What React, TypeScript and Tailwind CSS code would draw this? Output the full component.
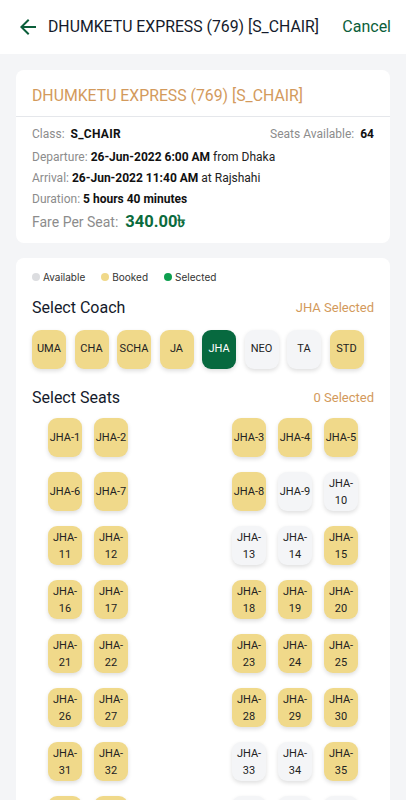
import { MdArrowBack } from "react-icons/md";

type SeatState = "booked" | "available" | "selected";

const coaches = [
  { name: "UMA", state: "booked" },
  { name: "CHA", state: "booked" },
  { name: "SCHA", state: "booked" },
  { name: "JA", state: "booked" },
  { name: "JHA", state: "selected" },
  { name: "NEO", state: "available" },
  { name: "TA", state: "available" },
  { name: "STD", state: "booked" },
] as { name: string; state: SeatState }[];

const availableSeats = [9, 10, 13, 14, 33, 34, 38, 39, 40];

const stateClass = (state: SeatState) => {
  if (state === "selected") return "bg-[#07693f] text-white";
  if (state === "available") return "bg-[#f4f5f7] text-[#222]";
  return "bg-[#f0d98a] text-[#222]";
};

const InfoRow = ({ label, value, extra }: { label: string; value: string; extra?: string }) => (
  <p className="flex h-[21px] items-center text-[12px] text-[#8c8c8c]">
    {label}:&nbsp;<span className="font-bold text-[#111]">{value}</span>
    {extra && <span className="text-[#222]">&nbsp;{extra}</span>}
  </p>
);

const Seat = ({ num }: { num: number }) => {
  const state: SeatState = availableSeats.includes(num) ? "available" : "booked";
  return (
    <button
      className={`flex h-[39px] w-[34px] items-center justify-center rounded-[9px] text-center text-[11px] leading-[17px] shadow-[0_2px_4px_rgba(0,0,0,0.13)] ${stateClass(state)}`}
    >
      JHA-{num}
    </button>
  );
};

const Legend = ({ color, label }: { color: string; label: string }) => (
  <div className="flex items-center gap-[3px]">
    <span className={`h-[8px] w-[8px] rounded-full ${color}`} />
    <span>{label}</span>
  </div>
);

export default function App() {
  const rows: number[][] = [];
  for (let i = 0; i < 8; i++) rows.push([1, 2, 3, 4, 5].map((n) => i * 5 + n));

  return (
    <div className="min-h-[800px] bg-[#f4f5f7] font-['Roboto','Noto_Sans','DejaVu_Sans',sans-serif]">
      <header className="flex h-[54px] items-center bg-white pl-4 pr-[15px]">
        <MdArrowBack className="text-[24px] text-[#0b5e3a]" />
        <h1 className="ml-2 flex-1 text-[15.8px] text-[#141a2b]">DHUMKETU EXPRESS (769) [S_CHAIR]</h1>
        <button className="text-[16px] text-[#0b5e3a]">Cancel</button>
      </header>

      <div className="px-4 pt-4">
        <section className="rounded-lg bg-white">
          <div className="border-b border-[#e5e7eb] px-4 pb-[8px] pt-[14px]">
            <h2 className="text-[15.8px] leading-6 text-[#d39a5c]">DHUMKETU EXPRESS (769) [S_CHAIR]</h2>
          </div>
          <div className="px-4 pb-[8px] pt-[5px]">
            <div className="flex h-[24px] items-center justify-between text-[12px] text-[#8c8c8c]">
              <p>
                Class:&nbsp;&nbsp;<span className="font-bold tracking-[0.3px] text-[#111]">S_CHAIR</span>
              </p>
              <p>
                Seats Available:&nbsp;&nbsp;<span className="font-bold text-[#111]">64</span>
              </p>
            </div>
            <InfoRow label="Departure" value="26-Jun-2022 6:00 AM" extra="from Dhaka" />
            <InfoRow label="Arrival" value="26-Jun-2022 11:40 AM" extra="at Rajshahi" />
            <InfoRow label="Duration" value="5 hours 40 minutes" />
            <p className="flex h-[26px] items-center text-[14px] text-[#8c8c8c]">
              Fare Per Seat:&nbsp;&nbsp;
              <span className="text-[16.5px] font-bold text-[#0b6b3d]">340.00৳</span>
            </p>
          </div>
        </section>

        <section className="mt-[15px] rounded-lg bg-white px-4 pb-6 pt-[12px]">
          <div className="flex h-[14px] items-center gap-[16px] font-['Inter',sans-serif] text-[10px] text-[#333]">
            <Legend color="bg-[#dcdde0]" label="Available" />
            <Legend color="bg-[#f0d98a]" label="Booked" />
            <Legend color="bg-[#0e9f4f]" label="Selected" />
          </div>

          <div className="mt-[12px] flex h-6 items-center justify-between">
            <h3 className="text-[16px] text-[#141a2b]">Select Coach</h3>
            <span className="text-[13px] text-[#d39a5c]">JHA Selected</span>
          </div>
          <div className="mt-[10px] flex gap-[8.5px]">
            {coaches.map((c) => (
              <button
                key={c.name}
                className={`flex h-[39px] w-[34px] items-center justify-center rounded-[9px] text-[11px] shadow-[0_2px_4px_rgba(0,0,0,0.13)] ${stateClass(c.state)}`}
              >
                {c.name}
              </button>
            ))}
          </div>

          <div className="mt-[17px] flex h-6 items-center justify-between">
            <h3 className="text-[16px] text-[#141a2b]">Select Seats</h3>
            <span className="text-[13px] text-[#d39a5c]">0 Selected</span>
          </div>
          <div className="mt-[8px] grid grid-cols-[repeat(7,34px)] gap-x-[12px] gap-y-[15px] pl-4">
            {rows.map((r) => (
              <div key={r[0]} className="contents">
                <Seat num={r[0]} />
                <Seat num={r[1]} />
                <div />
                <div />
                <Seat num={r[2]} />
                <Seat num={r[3]} />
                <Seat num={r[4]} />
              </div>
            ))}
          </div>
        </section>
      </div>
    </div>
  );
}
